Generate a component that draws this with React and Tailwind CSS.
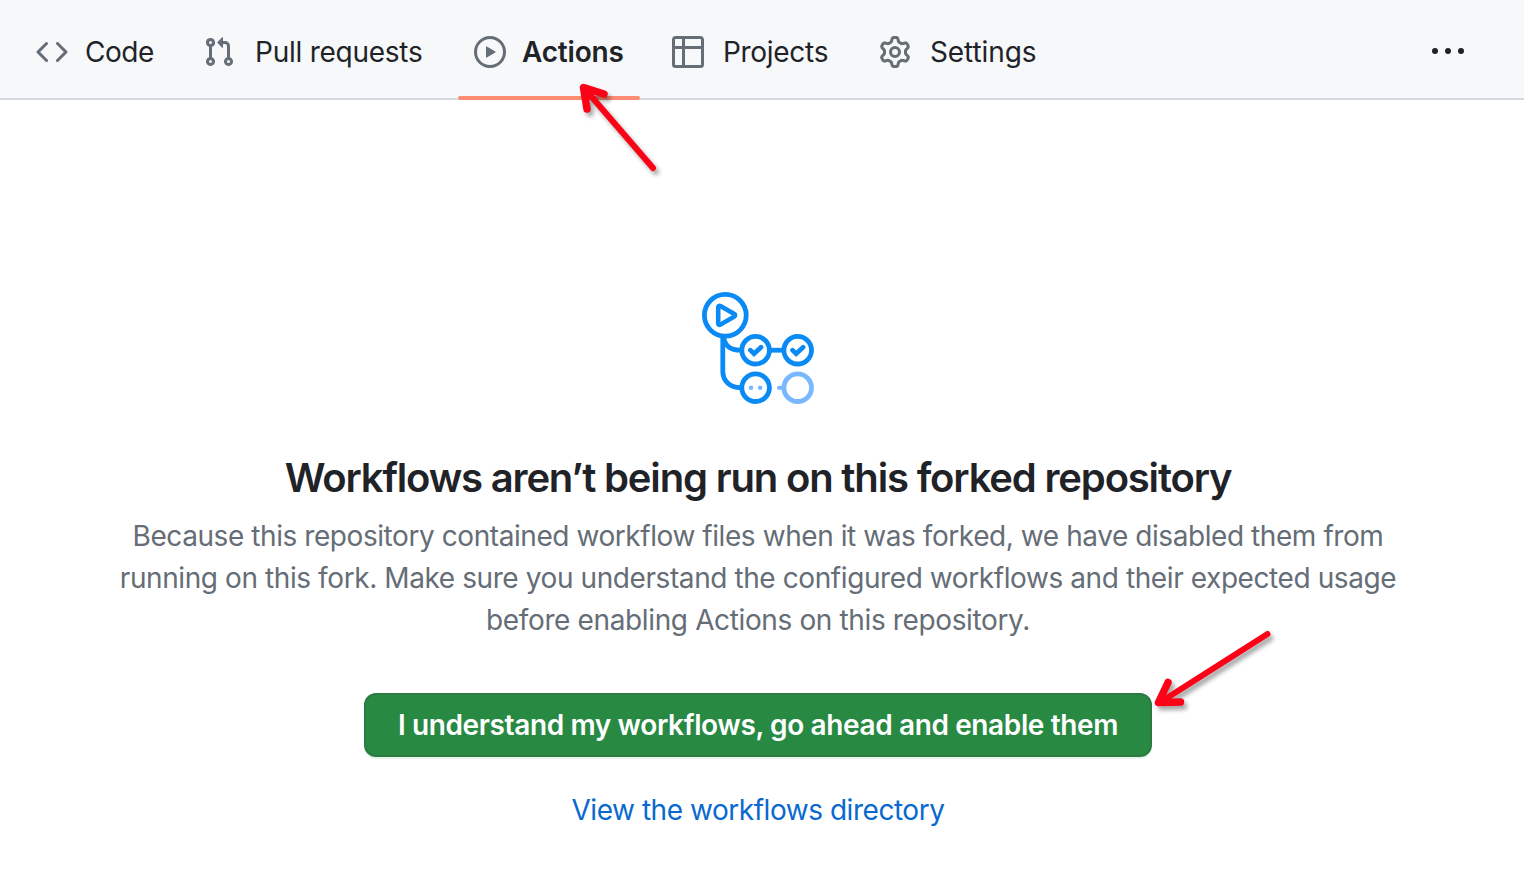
const ICONS = {
  code: "m11.28 3.22 4.25 4.25a.75.75 0 0 1 0 1.06l-4.25 4.25a.749.749 0 0 1-1.275-.326.749.749 0 0 1 .215-.734L13.94 8l-3.72-3.72a.749.749 0 0 1 .326-1.275.749.749 0 0 1 .734.215Zm-6.56 0a.751.751 0 0 1 1.042.018.751.751 0 0 1 .018 1.042L2.06 8l3.72 3.72a.749.749 0 0 1-.326 1.275.749.749 0 0 1-.734-.215L.47 8.53a.75.75 0 0 1 0-1.06Z",
  pull: "M1.5 3.25a2.25 2.25 0 1 1 3 2.122v5.256a2.251 2.251 0 1 1-1.5 0V5.372A2.25 2.25 0 0 1 1.5 3.25Zm5.677-.177L9.573.677A.25.25 0 0 1 10 .854V2.5h1A2.5 2.5 0 0 1 13.5 5v5.628a2.251 2.251 0 1 1-1.5 0V5a1 1 0 0 0-1-1h-1v1.646a.25.25 0 0 1-.427.177L7.177 3.427a.25.25 0 0 1 0-.354ZM3.75 2.5a.75.75 0 1 0 0 1.5.75.75 0 0 0 0-1.5Zm0 9.5a.75.75 0 1 0 0 1.5.75.75 0 0 0 0-1.5Zm8.25.75a.75.75 0 1 0 1.5 0 .75.75 0 0 0-1.5 0Z",
  play: "M8 0a8 8 0 1 1 0 16A8 8 0 0 1 8 0ZM1.5 8a6.5 6.5 0 1 0 13 0 6.5 6.5 0 0 0-13 0Zm4.879-2.773 4.264 2.559a.25.25 0 0 1 0 .428l-4.264 2.559A.25.25 0 0 1 6 10.559V5.442a.25.25 0 0 1 .379-.215Z",
  table: "M0 1.75C0 .784.784 0 1.75 0h12.5C15.216 0 16 .784 16 1.75v12.5A1.75 1.75 0 0 1 14.25 16H1.75A1.75 1.75 0 0 1 0 14.25ZM6.5 6.5v8h7.75a.25.25 0 0 0 .25-.25V6.5Zm8-1.5V1.75a.25.25 0 0 0-.25-.25H6.5V5Zm-13 1.5v7.75c0 .138.112.25.25.25H5v-8ZM5 5V1.5H1.75a.25.25 0 0 0-.25.25V5Z",
  gear: "M8 0a8.2 8.2 0 0 1 .701.031C9.444.095 9.99.645 10.16 1.29l.288 1.107c.018.066.079.158.212.224.231.114.454.243.668.386.123.082.233.09.299.071l1.103-.303c.644-.176 1.392.021 1.82.63.27.385.506.792.704 1.218.315.675.111 1.422-.364 1.891l-.814.806c-.049.048-.098.147-.088.294.016.257.016.515 0 .772-.01.147.038.246.088.294l.814.806c.475.469.679 1.216.364 1.891a7.977 7.977 0 0 1-.704 1.217c-.428.61-1.176.807-1.82.63l-1.102-.302c-.067-.019-.177-.011-.3.071a5.909 5.909 0 0 1-.668.386c-.133.066-.194.158-.211.224l-.29 1.106c-.168.646-.715 1.196-1.458 1.26a8.006 8.006 0 0 1-1.402 0c-.743-.064-1.289-.614-1.458-1.26l-.289-1.106c-.018-.066-.079-.158-.212-.224a5.738 5.738 0 0 1-.668-.386c-.123-.082-.233-.09-.299-.071l-1.103.303c-.644.176-1.392-.021-1.82-.63a8.12 8.12 0 0 1-.704-1.218c-.315-.675-.111-1.422.363-1.891l.815-.806c.05-.048.098-.147.088-.294a6.214 6.214 0 0 1 0-.772c.01-.147-.038-.246-.088-.294l-.815-.806C.635 6.045.431 5.298.746 4.623a7.92 7.92 0 0 1 .704-1.217c.428-.61 1.176-.807 1.82-.63l1.102.302c.067.019.177.011.3-.071.214-.143.437-.272.668-.386.133-.066.194-.158.211-.224l.29-1.106C6.009.645 6.556.095 7.299.03 7.53.01 7.764 0 8 0Zm-.571 1.525c-.036.003-.108.036-.137.146l-.289 1.105c-.147.561-.549.967-.998 1.189-.173.086-.34.183-.5.29-.417.278-.97.423-1.529.27l-1.103-.303c-.109-.03-.175.016-.195.045-.22.312-.412.644-.573.99-.014.031-.021.11.059.19l.815.806c.411.406.562.957.53 1.456a4.709 4.709 0 0 0 0 .582c.032.499-.119 1.05-.53 1.456l-.815.806c-.081.08-.073.159-.059.19.162.346.353.677.573.989.02.03.085.076.195.046l1.102-.303c.56-.153 1.113-.008 1.53.27.161.107.328.204.501.29.447.222.85.629.997 1.189l.289 1.105c.029.109.101.143.137.146a6.6 6.6 0 0 0 1.142 0c.036-.003.108-.036.137-.146l.289-1.105c.147-.561.549-.967.998-1.189.173-.086.34-.183.5-.29.417-.278.97-.423 1.529-.27l1.103.303c.109.029.175-.016.195-.045.22-.313.411-.644.573-.99.014-.031.021-.11-.059-.19l-.815-.806c-.411-.406-.562-.957-.53-1.456a4.709 4.709 0 0 0 0-.582c-.032-.499.119-1.05.53-1.456l.815-.806c.081-.08.073-.159.059-.19a6.464 6.464 0 0 0-.573-.989c-.02-.03-.085-.076-.195-.046l-1.102.303c-.56.153-1.113.008-1.53-.27a4.44 4.44 0 0 0-.501-.29c-.447-.222-.85-.629-.997-1.189l-.289-1.105c-.029-.11-.101-.143-.137-.146a6.6 6.6 0 0 0-1.142 0ZM11 8a3 3 0 1 1-6 0 3 3 0 0 1 6 0ZM9.5 8a1.5 1.5 0 1 0-3.001.001A1.5 1.5 0 0 0 9.5 8Z",
};

const TABS = [
  { label: "Code", icon: "code", box: "w-[151px] gap-[17px]", text: "tracking-[-0.5px]" },
  { label: "Pull requests", icon: "pull", box: "w-[255px] gap-5", text: "tracking-[-0.25px]" },
  { label: "Actions", icon: "play", box: "w-[182px] gap-4", text: "font-semibold tracking-[-0.2px]", active: true },
  { label: "Projects", icon: "table", box: "w-[191px] gap-[19px]", text: "tracking-[-0.3px]" },
  { label: "Settings", icon: "gear", box: "w-[190px] gap-[19px]", text: "tracking-[-0.1px]" },
];

function Tab({ label, icon, box, text, active }) {
  return (
    <a className={`relative flex h-[104px] shrink-0 items-center px-4 ${box}`}>
      <svg viewBox="0 0 16 16" className="size-8 shrink-0 fill-[#656d76]">
        <path d={ICONS[icon]} />
      </svg>
      <span className={`whitespace-nowrap text-[28px] leading-[42px] text-[#1f2328] ${text}`}>{label}</span>
      {active && <span className="absolute inset-x-0 top-24 h-1 rounded-full bg-[#fd8c73]" />}
    </a>
  );
}

function WorkflowArt() {
  return (
    <svg viewBox="0 0 112 112" className="size-28" fill="none" stroke="#0a8af5" strokeWidth="4.8">
      <circle cx="23.3" cy="23.3" r="20.9" />
      <path d="M16.2 15.2v16.2c0 1.2 1.2 1.8 2.2 1.2l14-8.1c1-.6 1-1.9 0-2.5l-14-8c-1-.6-2.2 0-2.2 1.2Z" strokeWidth="4.6" strokeLinejoin="round" />
      <path d="M20.8 45v34.5c0 9 7 16.2 17.5 16.2" />
      <path d="M21.5 45c1.5 9 6.5 13.2 17 13.2" />
      <path d="M69 58.2h12" />
      <circle cx="53.6" cy="58.2" r="13.8" />
      <circle cx="95.7" cy="58.2" r="13.8" />
      <circle cx="53.6" cy="95.7" r="13.8" />
      <path d="m48.4 58.2 3.6 3.6 7-6.6M90.500 58.200l3.600 3.600 7-6.600" strokeWidth="4.700" strokeLinecap="round" />
      <g stroke="#79b8ff">
        <circle cx="95.7" cy="95.7" r="13.8" />
        <path d="M77 95.7h5" strokeLinecap="round" strokeWidth="4" />
      </g>
      <g fill="#79b8ff" stroke="none">
        <circle cx="49" cy="95.7" r="2.3" />
        <circle cx="58.2" cy="95.7" r="2.3" />
      </g>
    </svg>
  );
}

export default function App() {
  return (
    <div className="relative flex h-[876px] w-[1524px] flex-col overflow-hidden bg-white font-['Inter','Liberation_Sans',sans-serif]">
      <nav className="flex h-[100px] shrink-0 items-start gap-4 border-b-2 border-[#d5dae0] bg-[#f6f8fa] pl-5 pr-[60px]">
        {TABS.map((tab) => (
          <Tab key={tab.label} {...tab} />
        ))}
        <button className="ml-auto flex h-[102px] items-center gap-[7px]" aria-label="More">
          <span className="size-1.5 rounded-full bg-[#1f2328]" />
          <span className="size-1.5 rounded-full bg-[#1f2328]" />
          <span className="size-1.5 rounded-full bg-[#1f2328]" />
        </button>
      </nav>

      <main className="flex w-[1516px] flex-col items-center pt-48 text-center">
        <WorkflowArt />
        <h1 className="mt-11 whitespace-nowrap text-[40px] font-semibold leading-[60px] tracking-[-1.17px] text-[#1f2328]">
          Workflows aren’t being run on this forked repository
        </h1>
        <p className="mt-[7px] whitespace-nowrap text-[28px] leading-[42px] text-[#656d76]">
          <span className="block tracking-[-0.43px]">Because this repository contained workflow files when it was forked, we have disabled them from</span>
          <span className="block tracking-[-0.41px]">running on this fork. Make sure you understand the configured workflows and their expected usage</span>
          <span className="block tracking-[-0.37px]">before enabling Actions on this repository.</span>
        </p>
        <button className="mt-[52px] h-16 w-[788px] whitespace-nowrap rounded-xl border-2 border-[#2b7a42] bg-[#288943] text-[28px] font-semibold leading-[40px] tracking-[-0.38px] text-white shadow-[0_2px_0_rgba(31,136,61,0.1)]">
          I understand my workflows, go ahead and enable them
        </button>
        <a className="mt-8 whitespace-nowrap text-[28px] leading-[42px] tracking-[-0.46px] text-[#0969cf]">View the workflows directory</a>
      </main>

      <svg
        viewBox="0 0 1524 876"
        className="pointer-events-none absolute inset-0 size-full drop-shadow-[3px_4px_2px_rgba(0,0,0,0.35)]"
        fill="none"
        stroke="#fb0217"
        strokeLinecap="round"
        strokeLinejoin="round"
      >
        <path d="M653 168 584 88M1267.500 634 1159 703" strokeWidth="6" />
        <path d="M604 94 583.500 87.500 587 109M1168 682.500 1158.500 702.500 1180.500 702" strokeWidth="7.500" />
      </svg>
    </div>
  );
}
